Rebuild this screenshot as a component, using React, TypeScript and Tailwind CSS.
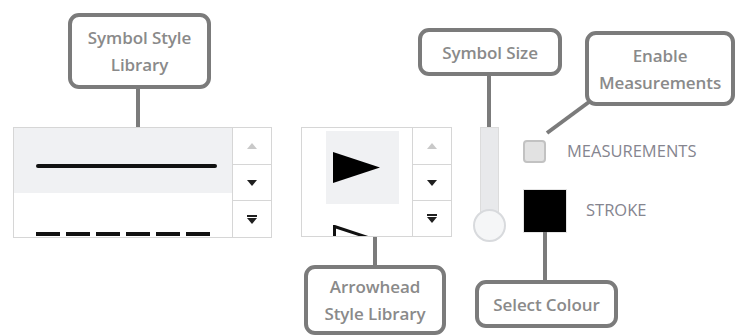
import React from "react";

const font = { fontFamily: '"Open Sans", "Liberation Sans", sans-serif' };

// callout box used for the annotations
function Callout({ className, lines }: { className: string; lines: string[] }) {
  return (
    <div
      className={`absolute flex flex-col items-center justify-center rounded-[11px] border-[4px] border-[#7b7b7b] bg-white text-[17px] font-semibold leading-[27px] tracking-[-0.1px] text-[#8a8a8a] ${className}`}
    >
      {lines.map((l) => (
        <span key={l} className="whitespace-nowrap">{l}</span>
      ))}
    </div>
  );
}

function SpinColumn() {
  return (
    <div className="flex w-[39px] flex-col border-l border-[#d6d6d6]">
      <div className="flex h-[37px] items-center justify-center border-b border-[#d6d6d6]">
        <svg width="10" height="6" viewBox="0 0 10 6">
          <polygon points="0,6 10,6 5,0" fill="#c9c9c9" />
        </svg>
      </div>
      <div className="flex h-[36px] items-center justify-center border-b border-[#d6d6d6]">
        <svg width="10" height="6" viewBox="0 0 10 6">
          <polygon points="0,0 10,0 5,6" fill="#1f1f1f" />
        </svg>
      </div>
      <div className="flex flex-1 items-center justify-center">
        <svg width="10" height="9" viewBox="0 0 10 9">
          <rect x="0" y="0" width="10" height="2" fill="#1f1f1f" />
          <polygon points="0,3 10,3 5,9" fill="#1f1f1f" />
        </svg>
      </div>
    </div>
  );
}

export default function App() {
  return (
    <div className="relative h-[336px] w-[735px] overflow-hidden bg-white" style={font}>
      {/* controls row */}
      <div className="flex items-start pl-[13px] pt-[127px]">
        {/* symbol style library */}
        <div className="flex h-[111px] w-[259px] border border-[#d6d6d6]">
          <div className="flex-1 overflow-hidden">
            <div className="flex h-[65px] items-center bg-[#f0f1f3] pl-[22px] pt-[10px]">
              <div className="h-[4px] w-[181px] rounded-full bg-[#111]" />
            </div>
            <div className="flex h-[65px] items-start pl-[22px] pt-[38px]">
              <svg width="174" height="6" viewBox="0 0 174 6">
                <line x1="0" y1="3" x2="174" y2="3" stroke="#111" strokeWidth="4" strokeDasharray="24 6" />
              </svg>
            </div>
          </div>
          <SpinColumn />
        </div>

        {/* arrowhead style library */}
        <div className="ml-[29px] flex h-[110px] w-[151px] border border-[#d6d6d6]">
          <div className="flex-1 overflow-hidden pl-[24px] pt-[3px]">
            <div className="flex h-[73px] w-[73px] items-start bg-[#f0f1f3] pl-[7px] pt-[21px]">
              <svg width="47" height="31" viewBox="0 0 47 31">
                <polygon points="0,0 47,15.5 0,31" fill="#000" />
              </svg>
            </div>
            <div className="flex h-[73px] w-[73px] items-start pl-[7px] pt-[21px]">
              <svg width="47" height="31" viewBox="0 0 47 31">
                <polygon points="1.5,1.5 44,15.5 1.5,29.5" fill="#fff" stroke="#111" strokeWidth="3" />
              </svg>
            </div>
          </div>
          <SpinColumn />
        </div>

        {/* symbol size slider */}
        <div className="ml-[21px] flex w-[33px] flex-col items-center">
          <div className="h-[90px] w-[19px] border border-[#dcdcdc] bg-[#e8e9eb]" />
          <div className="-mt-[8px] h-[33px] w-[33px] rounded-full border-2 border-[#d8dadd] bg-[#f5f6f7]" />
        </div>

        {/* measurements / stroke */}
        <div className="ml-[17px] flex flex-col">
          <div className="mt-[12px] flex items-center">
            <div className="h-[23px] w-[23px] rounded-[4px] border-2 border-[#c2c2c2] bg-[#e2e2e2]" />
            <span className="ml-[21px] text-[16.5px] text-[#85858f]">MEASUREMENTS</span>
          </div>
          <div className="mt-[25px] flex items-center">
            <div className="h-[44px] w-[44px] border border-[#e4e4e4] bg-black" />
            <span className="ml-[19px] text-[16.5px] text-[#85858f]">STROKE</span>
          </div>
        </div>
      </div>

      {/* connector lines */}
      <svg className="absolute left-0 top-0" width="735" height="336">
        <g stroke="#7b7b7b" strokeWidth="4">
          <line x1="138" y1="88" x2="138" y2="127" />
          <line x1="375" y1="237" x2="375" y2="266" />
          <line x1="489" y1="75" x2="489" y2="127" />
          <line x1="589" y1="102" x2="547" y2="133" />
          <line x1="545" y1="232" x2="545" y2="281" />
        </g>
      </svg>

      <Callout className="left-[68px] top-[13px] h-[76px] w-[143px]" lines={["Symbol Style", "Library"]} />
      <Callout className="left-[304px] top-[265px] h-[70px] w-[142px]" lines={["Arrowhead", "Style Library"]} />
      <Callout className="left-[418px] top-[28px] h-[48px] w-[144px]" lines={["Symbol Size"]} />
      <Callout className="left-[585px] top-[31px] h-[75px] w-[150px]" lines={["Enable", "Measurements"]} />
      <Callout className="left-[475px] top-[280px] h-[48px] w-[143px]" lines={["Select Colour"]} />
    </div>
  );
}
